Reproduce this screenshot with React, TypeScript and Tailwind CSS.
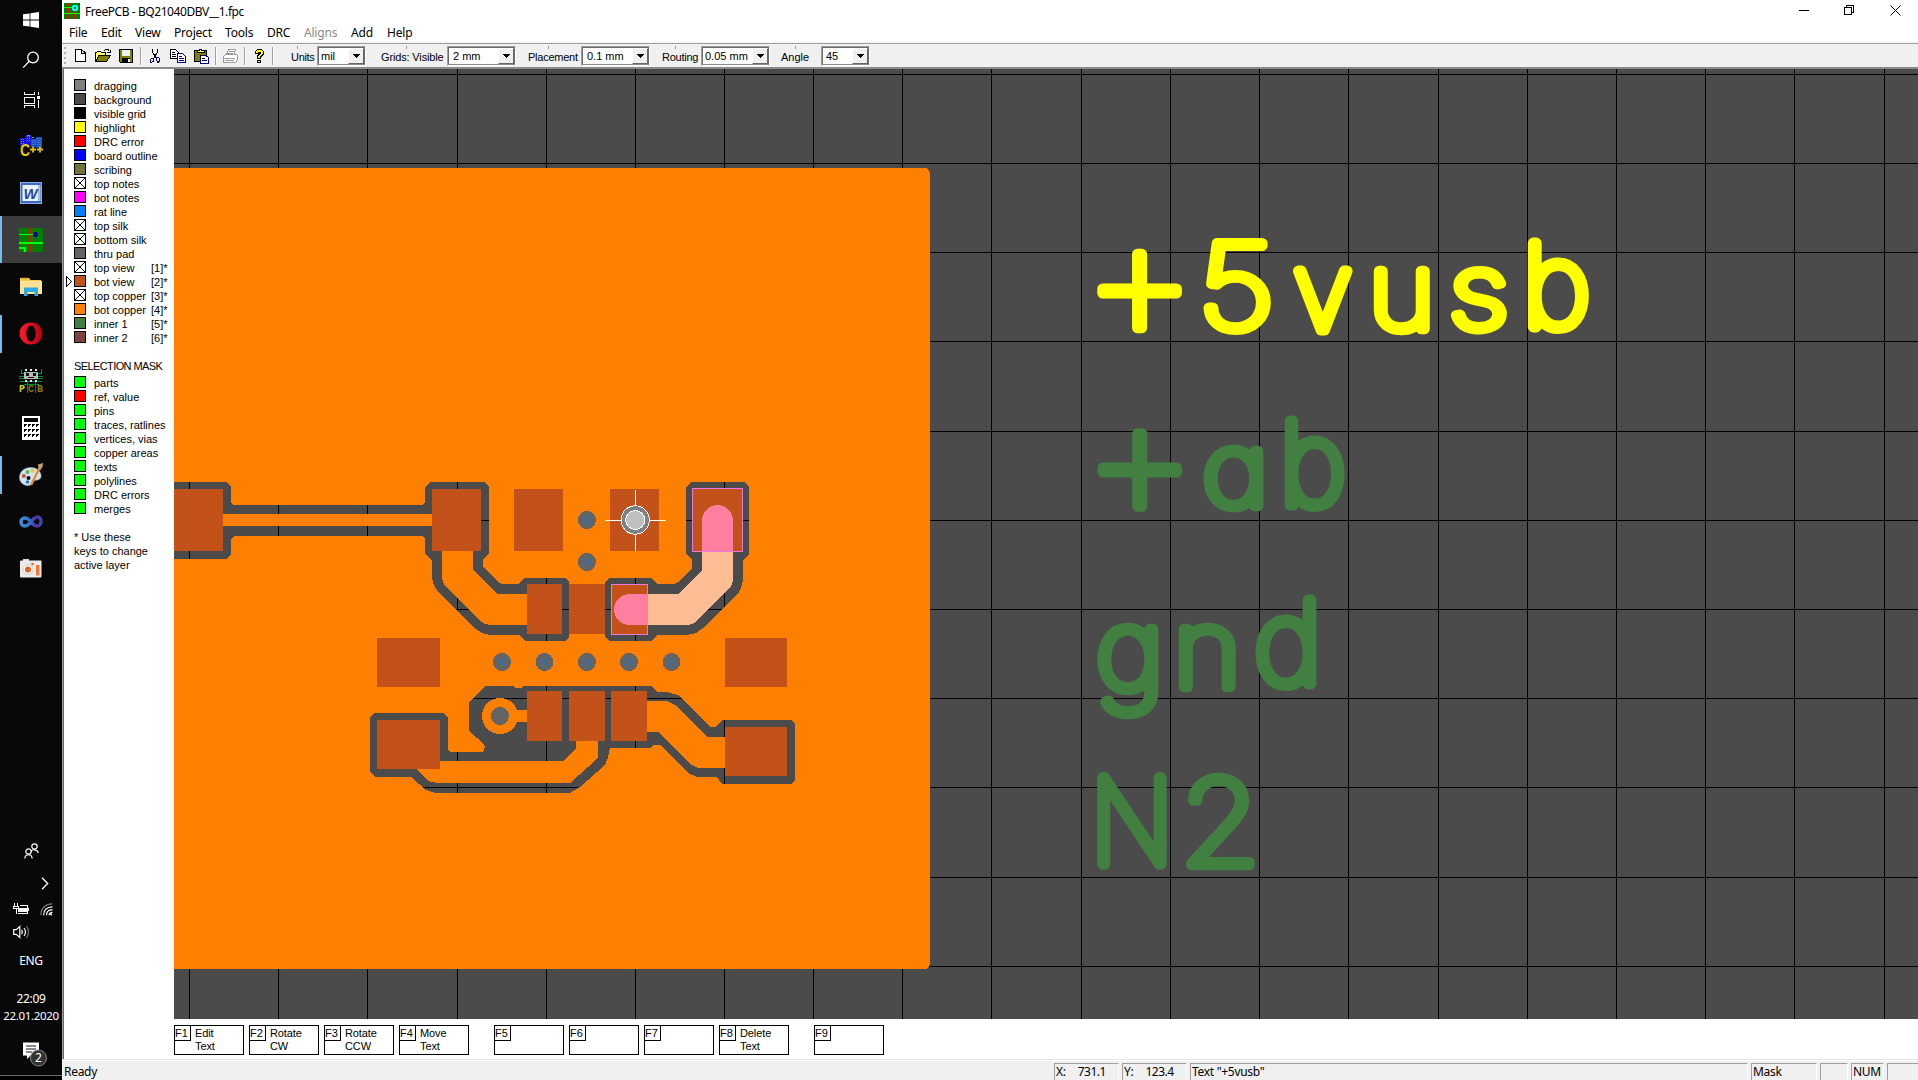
import React, { useMemo } from "react";

const UI = "font-['Noto_Sans',sans-serif]";
const ARIAL = "font-['Liberation_Sans',Arial,sans-serif]";

/* ---------- taskbar icons ---------- */

function WindowsIcon() {
  return (
    <svg width="16" height="16" viewBox="0 0 16 16" fill="#fff">
      <path d="M0 2.3 6.6 1.4V7.6H0zM7.4 1.3 16 0V7.6H7.4zM0 8.4H6.6V14.6L0 13.7zM7.4 8.4H16V16L7.4 14.8z" />
    </svg>
  );
}
function SearchIcon() {
  return (
    <svg width="18" height="18" viewBox="0 0 18 18" fill="none" stroke="#fff" strokeWidth="1.3">
      <circle cx="11" cy="6.5" r="5.3" />
      <path d="M7.2 10.3 1.2 16.6" />
    </svg>
  );
}
function TaskViewIcon() {
  return (
    <svg width="17" height="16" viewBox="0 0 17 16" fill="none" stroke="#fff" shapeRendering="crispEdges">
      <path d="M1.5 0V2.5H11.5V0M1.5 16V13.5H11.5V16M1.5 5.5H11.5V11.5H1.5zM15.5 0V3M15.5 8V16" />
      <rect x="14" y="4" width="3" height="3" fill="#fff" stroke="none" />
    </svg>
  );
}
function CppIcon() {
  return (
    <svg width="24" height="24" viewBox="0 0 24 24">
      <path d="M1 4h5V2h1v10H1zM7 1h6v11H7z" fill="#1616e0" />
      <path d="M12 5h5v8h-5zM17 3h6v11h-6z" fill="#1a4fc0" />
      <path d="M2.500 5v6M4.500 5v6M8.500 2v6M10.500 2v6M14 6v5M16 6v5M19 4v7M21 4v7" stroke="#4a9ad0" strokeDasharray="1 1" />
      <path d="M8 1.5h3M13 3.5h2" stroke="#5aa" />
      <text x="1" y="22" className="font-['Liberation_Sans',sans-serif]" fontWeight="700" fontSize="16" fill="#e8c800" textLength="10" lengthAdjust="spacingAndGlyphs">C</text>
      <path d="M11 15.500h6M14 12.500v6M18 15.500h6M21 12.500v6" stroke="#e0c000" strokeWidth="1.8" />
    </svg>
  );
}
function WordIcon() {
  return (
    <svg width="22" height="22" viewBox="0 0 22 22">
      <rect x="0.500" y="0.500" width="21" height="21" fill="#3d6bc0" stroke="#8fb0e6" />
      <rect x="2.500" y="3" width="16" height="16" fill="#e9f0fb" />
      <path d="M18.500 3h2v16h-2z" fill="#a9c1ea" />
      <text x="3.500" y="16.500" className="font-['Liberation_Sans',sans-serif]" fontStyle="italic" fontWeight="700" fontSize="15" fill="#24489c" textLength="14" lengthAdjust="spacingAndGlyphs">W</text>
    </svg>
  );
}
function PcbTaskIcon() {
  return (
    <svg width="24" height="24" viewBox="0 0 24 24" shapeRendering="crispEdges">
      <rect width="24" height="24" fill="#008000" />
      <path d="M10 0h2v24h-2zM16 8h1v16h-1z" fill="#f00" />
      <path d="M0 6h15v1H0zM0 14h24v2H0zM0 19h7v5H5v-3H0z" fill="#0f0" />
      <path d="M15 4h3v1h1v3h-1v1h-3v-1h-1V5h1z" fill="#00008b" />
      <path d="M16 6h1v1h-1z" fill="#008000" />
    </svg>
  );
}
function FolderIcon() {
  return (
    <svg width="22" height="20" viewBox="0 0 22 20">
      <path d="M0 1h9l1.500 2H21v14H0z" fill="#f2c94c" />
      <path d="M0 4h22v13H0z" fill="#fde293" />
      <path d="M1 1.500h7" stroke="#e8a81c" strokeWidth="1.500" />
      <path d="M4 10.500h14V19h-3.500v-4h-7v4H4z" fill="#2fa8e8" />
    </svg>
  );
}
function OperaIcon() {
  return (
    <svg width="24" height="23" viewBox="0 0 24 23">
      <defs>
        <linearGradient id="op" x1="0" x2="1">
          <stop offset="0" stopColor="#ff1b2d" />
          <stop offset="1" stopColor="#b5000f" />
        </linearGradient>
      </defs>
      <path fillRule="evenodd" fill="url(#op)" d="M12 .5C5.500.500.600 5.400.600 11.500S5.500 22.500 12 22.500 23.400 17.600 23.400 11.500 18.500.500 12 .500zM12 3.500c2.700 0 4.600 3.500 4.600 8s-1.900 8-4.600 8-4.600-3.500-4.600-8 1.900-8 4.600-8z" />
    </svg>
  );
}
function PcbMascotIcon() {
  return (
    <svg width="24" height="24" viewBox="0 0 24 24" className="overflow-visible" shapeRendering="crispEdges">
      <path d="M2 0v4h3M22 0v4h-3M0 7.500h5M0 9.500h5M19 7.500h5M19 9.500h5M1 12.500h22M8 13v11M16 13v11M5 15h15" fill="none" stroke="#0a8a3c" />
      <path d="M5 3h14v7H5z" fill="#b8b8b8" />
      <path d="M6 0h2v2H6zM11 0h2v2h-2zM16 0h2v2h-2zM6 11h2v2H6zM11 11h2v2h-2zM16 11h2v2h-2z" fill="#e8e8e8" />
      <path d="M7 4h3v3H7zM14 4h3v3h-3zM9 8h6v1H9z" fill="#111" />
      <path d="M6 3h2v1H6zM17 3h2v1h-2z" fill="#1fb5d8" />
      <g className="font-['Liberation_Mono',monospace]" fontWeight="700" fontSize="10">
        <text x="0" y="23" fill="#d0d020">P</text>
        <text x="9" y="23" fill="#8a7a10">C</text>
        <text x="18" y="23" fill="#8a7a10">B</text>
      </g>
    </svg>
  );
}
function CalculatorIcon() {
  return (
    <svg width="18" height="24" viewBox="0 0 18 24" shapeRendering="crispEdges">
      <rect width="18" height="24" fill="#fff" />
      <path d="M2 2h14v4H2z" fill="#080808" />
      {[8, 13, 18].map((y) =>
        [2, 6, 10, 14].map((x) => <path key={`${x}-${y}`} d={`M${x} ${y}h3v1h-1v1h-1v1h-1z`} fill="#080808" />)
      )}
    </svg>
  );
}
function PaintIcon() {
  return (
    <svg width="25" height="24" viewBox="0 0 25 24">
      <path d="M12 4.500C5 4.500.500 9 .500 14.500S5.500 23 10 22.500c3-.300 2-3 4-4.500s7 0 8-4c.800-5-4-9.500-10-9.500z" fill="#cfe4f4" stroke="#8fb4cf" strokeWidth=".6" />
      <circle cx="4.800" cy="13" r="2" fill="#e0453a" />
      <circle cx="8.500" cy="9" r="2" fill="#5fb54a" />
      <circle cx="13.500" cy="7.800" r="2" fill="#f3c233" />
      <circle cx="9.500" cy="15" r="2" fill="#0a0a0a" />
      <circle cx="8.500" cy="19" r="1.800" fill="#2f74c8" />
      <path d="M12 22 20.500 5" stroke="#e58a24" strokeWidth="2.400" />
      <path d="M19.500 6 19 1.500 24 0l-.300 3.500-2.200 3.500z" fill="#c79a6a" />
    </svg>
  );
}
function InfinityIcon() {
  return (
    <svg width="24" height="14" viewBox="0 0 24 14" fill="none" strokeWidth="3.400">
      <defs>
        <linearGradient id="inf" x1="0" x2="1">
          <stop offset="0" stopColor="#3f8fd8" />
          <stop offset="0.500" stopColor="#3468c4" />
          <stop offset="0.750" stopColor="#5b2aa0" />
          <stop offset="1" stopColor="#3a4ab0" />
        </linearGradient>
      </defs>
      <path stroke="url(#inf)" d="M12 7C9.500 3.500 7.500 3 5.800 3 3.600 3 2 4.700 2 7s1.600 4 3.800 4c2.400 0 4.400-2 6.200-4s3.600-5 6.400-5C20.600 2 22 4 22 6.500S20.400 11 18 11s-4.200-2-6-4z" />
    </svg>
  );
}
function CameraIcon() {
  return (
    <svg width="22" height="19" viewBox="0 0 22 19">
      <path d="M3 0h6v3H3z" fill="#ddd" />
      <rect y="1.500" width="21.500" height="17" rx="1" fill="#ececec" />
      <circle cx="8" cy="10.500" r="5" fill="#fff" stroke="#ccc" />
      <circle cx="8" cy="10.500" r="3.100" fill="#e8641e" />
      <circle cx="12.500" cy="5" r="1.300" fill="#e8641e" />
      <rect x="16" y="6" width="3.500" height="10.500" fill="#f07a32" />
    </svg>
  );
}

type Task = { icon: React.ReactNode; state?: "active" | "open" };
const tasks: Task[] = [
  { icon: <CppIcon /> },
  { icon: <WordIcon /> },
  { icon: <PcbTaskIcon />, state: "active" },
  { icon: <FolderIcon /> },
  { icon: <OperaIcon />, state: "open" },
  { icon: <PcbMascotIcon /> },
  { icon: <CalculatorIcon /> },
  { icon: <PaintIcon />, state: "open" },
  { icon: <InfinityIcon /> },
  { icon: <CameraIcon /> },
];

function Taskbar() {
  return (
    <aside className={`flex h-full w-[62px] shrink-0 flex-col bg-[#080808] text-white ${UI}`}>
      <div className="flex h-10 items-center justify-center"><WindowsIcon /></div>
      <div className="flex h-10 items-center justify-center"><SearchIcon /></div>
      <div className="flex h-10 items-center justify-center pl-px"><TaskViewIcon /></div>
      <div className="mt-[2px] flex flex-col">
        {tasks.map((t, i) => (
          <div key={i} className={`flex h-[47px] items-center ${t.state === "active" ? "bg-[#3c3c3c]" : ""}`}>
            <div className={`w-[2px] ${t.state === "active" ? "h-[47px] bg-[#76b9ed]" : t.state === "open" ? "h-[38px] bg-[#76b9ed]" : ""}`} />
            <div className="flex flex-1 justify-center pr-[2px]">{t.icon}</div>
          </div>
        ))}
      </div>
      <div className="flex-1" />
      <div className="flex h-9 items-center justify-center pt-[2px]">
        <svg width="15" height="16" viewBox="0 0 15 16" fill="none" stroke="#fff" strokeWidth="1.200">
          <circle cx="10.500" cy="3.500" r="2.700" /><path d="M7 8.500c1-2.500 6.500-2.500 7.300 1.500" />
          <circle cx="4.500" cy="8.500" r="2.700" /><path d="M.8 15.500c.300-5 7-5 7.400 0" />
        </svg>
      </div>
      <div className="flex h-[30px] items-center pl-[41px] pt-px">
        <svg width="8" height="13" viewBox="0 0 8 13" fill="none" stroke="#fff" strokeWidth="1.300"><path d="M1 .8 6.700 6.500 1 12.200" /></svg>
      </div>
      <div className="flex h-[23px] items-center gap-[10px] pl-[13px]">
        <svg width="17" height="12" viewBox="0 0 17 12" fill="none" stroke="#fff" shapeRendering="crispEdges" className="mb-[2px]">
          <path d="M1.500 0v3M4.500 0v3M0 3.500h6M.5 3v2h5V3M3 6v5M5 10.500h9.500v-8H7M15.500 5v3" />
          <path d="M5 4.500h8.500v4.500H5z" fill="#fff" stroke="none" />
        </svg>
        <svg width="14" height="13" viewBox="0 0 14 13" fill="none" stroke="#fff" strokeWidth="1.200">
          <path d="M.8 12C.800 5.500 5.500.900 12.500.900" stroke="#777" />
          <path d="M3.600 12.200C3.600 7 7 4 12.500 3.800M6.500 12.200c0-3 2-5.300 6-5.500M9 12.200c.200-1.500 1.300-2.700 3.500-2.900" />
          <circle cx="11.200" cy="11.500" r="1" fill="#fff" stroke="none" />
        </svg>
      </div>
      <div className="flex h-6 items-center pb-[2px] pl-[13px]">
        <svg width="17" height="14" viewBox="0 0 17 14" fill="none" stroke="#fff" strokeWidth="1.200">
          <path d="M.7 4.700h2.500L6.800 1.500v11L3.200 9.300H.700z" /><path d="M8.600 4.800c1 1.400 1 3 0 4.400M11 3c1.900 2.500 1.900 5.500 0 8" /><path d="M13.500 1c2.700 4 2.700 8 0 12" stroke="#777" />
        </svg>
      </div>
      <div className="flex h-8 items-center justify-center text-[12px] tracking-[-0.3px]">ENG</div>
      <div className="mt-[13px] flex flex-col items-center text-[12px] leading-[17px] tracking-[-0.35px]">
        <span>22:09</span>
        <span className="whitespace-nowrap text-[11.500px]">22.01.2020</span>
      </div>
      <div className="mt-[18px] flex h-[33px] pl-[23px]">
        <svg width="26" height="26" viewBox="0 0 26 26">
          <path d="M0 .5h16v13H7.500L4 17v-3.500H0z" fill="#fff" />
          <path d="M3 4h10M3 7h10M3 10h6" stroke="#111" />
          <circle cx="15.500" cy="16" r="8" fill="#333" stroke="#888" />
          <text x="15.500" y="20.300" fontSize="12" fill="#fff" textAnchor="middle">2</text>
        </svg>
      </div>
      <div className="h-[5px] shrink-0 border-t border-[#6a6a6a] bg-black" />
    </aside>
  );
}

/* ---------- title, menu and toolbar ---------- */

function AppIcon() {
  return (
    <svg width="16" height="16" viewBox="0 0 16 16" shapeRendering="crispEdges">
      <rect width="16" height="16" fill="#008000" />
      <path d="M4 0h2v16H4zM10 8h2v8h-2z" fill="#f00" />
      <path d="M0 4h9v1H0zM0 10h16v1H0z" fill="#0f0" />
      <circle cx="11" cy="5" r="2.300" fill="#008000" stroke="#0ff" strokeWidth="1.600" />
    </svg>
  );
}

const menu: [string, string][] = [
  ["File", "w-[32px]"],
  ["Edit", "w-[34px]"],
  ["View", "w-[39px]"],
  ["Project", "w-[51px]"],
  ["Tools", "w-[42px]"],
  ["DRC", "w-[37px]"],
  ["Aligns", "w-[47px]"],
  ["Add", "w-[36px]"],
  ["Help", "w-[40px]"],
];

function TitleBar() {
  return (
    <header className={`flex h-[22px] shrink-0 items-start bg-white pl-[2px] text-[12px] text-black ${UI}`}>
      <div className="pt-[3px]"><AppIcon /></div>
      <span className="ml-[5px] whitespace-nowrap leading-[24px] tracking-[-0.43px]">FreePCB - BQ21040DBV__1.fpc</span>
      <div className="flex-1" />
      <div className="flex items-center gap-[35px] pr-[17px] pt-[5px]">
        <svg width="11" height="11" viewBox="0 0 11 11" stroke="#000" shapeRendering="crispEdges"><path d="M1 5.500h10" /></svg>
        <svg width="11" height="11" viewBox="0 0 11 11" stroke="#000" fill="none" shapeRendering="crispEdges"><path d="M.5 2.500h7v7h-7zM2.500 2V.500h7v7H8" /></svg>
        <svg width="11" height="11" viewBox="0 0 11 11" stroke="#000"><path d="M.5.500l10 10M10.500.500l-10 10" /></svg>
      </div>
    </header>
  );
}

function MenuBar() {
  return (
    <nav className={`flex h-[20px] shrink-0 bg-white pl-[7px] text-[12px] leading-[22px] tracking-[-0.2px] ${UI}`}>
      {menu.map(([m, w]) => (
        <span key={m} className={`${w} whitespace-nowrap ${m === "Aligns" ? "text-[#8a8a8a]" : "text-black"}`}>{m}</span>
      ))}
    </nav>
  );
}

const toolIcons = {
  create: <path d="M3.500 1.500h6l4 3.500v8.500h-10zM9.500 1.500v3.500h3.500" fill="#fff" stroke="#000" />,
  open: (
    <>
      <path d="M.5 13.500v-9h1l1-1h3l1 1h4v2" fill="#ff6" stroke="#000" />
      <path d="M.500 13.500 4 7.500h11.500l-4 6z" fill="#808000" stroke="#000" />
      <path d="M9 2.500l1.500-1H13l1.500 2M12 4h3V1.500" fill="none" stroke="#000" />
    </>
  ),
  save: (
    <>
      <path d="M1.500 1.500h13v13H3l-1.500-1z" fill="#808000" stroke="#000" />
      <path d="M4 2h8v6H4z" fill="#f0f0f0" />
      <path d="M4 10h8v4H4z" fill="#000" /><path d="M9.500 11h2v3h-2z" fill="#f0f0f0" />
    </>
  ),
  cut: (
    <>
      <path d="M5.500 1v3l3.500 6M10.500 1v3L7 10" fill="none" stroke="#000" />
      <path d="M4.500 10.500h2v3h-1l-1 1h-1v-3zM9.500 9.500h2l1 1.500v2l-1 1h-1l-1-1.500z" fill="none" stroke="#000080" />
    </>
  ),
  copy: (
    <>
      <path d="M.5 1.500h5l2.500 2.500v6.500H.500z" fill="#fff" stroke="#000" /><path d="M2 4h3M2 6h4M2 8h4" stroke="#000" />
      <path d="M7.500 5.500h5l3 3v6h-8z" fill="#fff" stroke="#000080" /><path d="M9 8.500h3M9 10.500h5M9 12.500h5" stroke="#000080" />
    </>
  ),
  paste: (
    <>
      <path d="M1.500 2.500h12v11h-12z" fill="#808000" stroke="#000" />
      <path d="M4.500 3.500v-1h2l.500-1.500h1.500l.500 1.500h2v2h-6.500z" fill="#ff6" stroke="#000" />
      <path d="M7.500 7.500h5l3 2v5.500h-8z" fill="#fff" stroke="#000080" /><path d="M9 10h3M9 12h5" stroke="#000080" />
    </>
  ),
  print: (
    <>
      <path d="M4.500 7 6.500 1.500h7L12 7M1.500 8.500l2-2h11l1 1v4l-2 3h-12z" fill="#fff" stroke="#9a9a9a" />
      <path d="M7 3.500h5M6 5.500h5M2 10.500h11M3 12.500h9" stroke="#9a9a9a" />
    </>
  ),
  help: (
    <>
      <path d="M4.500 5.500v-2l2-2h4l2 2v2.500l-3 3v1.500h-3V8l3-3v-.500h-2v1.500z" fill="#ff0" stroke="#000" />
      <path d="M6.500 12.500h3v2h-3z" fill="#ff0" stroke="#000" />
    </>
  ),
};

function Tool({ name }: { name: keyof typeof toolIcons }) {
  return (
    <button className="flex h-[22px] w-[23px] items-center justify-center">
      <svg width="16" height="16" viewBox="0 0 16 16" shapeRendering="crispEdges">{toolIcons[name]}</svg>
    </button>
  );
}
function Sep({ className = "" }: { className?: string }) {
  return <div className={`h-[18px] w-[2px] shrink-0 border-l border-[#a0a0a0] border-r border-r-white ${className}`} />;
}
function Combo({ value, className, pad = "pl-[4px]" }: { value: string; className: string; pad?: string }) {
  return (
    <div className={`flex h-[20px] shrink-0 items-stretch border border-[#a0a0a0] border-b-white border-r-white bg-white ${className}`}>
      <div className="flex flex-1 items-stretch border border-[#696969] border-b-[#8a8a8a] border-r-[#696969]">
        <span className={`flex-1 whitespace-nowrap text-[11px] leading-[16px] ${pad}`}>{value}</span>
        <div className="flex w-[16px] items-center justify-center border border-b-[#696969] border-l-white border-r-[#696969] border-t-white bg-[#f0f0f0]">
          <svg width="7" height="4" viewBox="0 0 7 4" shapeRendering="crispEdges"><path d="M0 0h7v1H6v1H5v1H4v1H3V3H2V2H1V1H0z" /></svg>
        </div>
      </div>
    </div>
  );
}
function ToolLabel({ children, className, tick }: { children: string; className: string; tick: string }) {
  return (
    <div className={`flex h-[20px] shrink-0 flex-col ${className}`}>
      <div className={`h-[3px] w-px bg-[#a0a0a0] ${tick}`} />
      <span className="mt-[2px] whitespace-nowrap text-[11px] leading-[13px]">{children}</span>
    </div>
  );
}

function Toolbar() {
  return (
    <div className={`flex h-[27px] shrink-0 flex-col border-t border-[#f0f0f0] ${ARIAL}`}>
      <div className="flex h-[26px] items-center border-b-2 border-t border-b-[#8a8a8a] border-t-[#a0a0a0] bg-[#f0f0f0] pl-[2px] text-black">
        <div className="flex h-[20px] w-[4px] flex-col justify-around">
          {[0, 1, 2, 3].map((i) => <div key={i} className="h-[2px] w-[2px] bg-[#b4b4b4]" />)}
        </div>
        <Tool name="create" /><Tool name="open" /><Tool name="save" />
        <Sep className="ml-[3px] mr-px" />
        <Tool name="cut" /><Tool name="copy" /><Tool name="paste" />
        <Sep className="ml-[3px] mr-px" />
        <Tool name="print" />
        <Sep className="ml-[3px] mr-px" />
        <Tool name="help" />
        <Sep className="ml-[2px]" />
        <ToolLabel className="ml-[17px] w-[26px] tracking-[-0.3px]" tick="ml-[6px]">Units</ToolLabel>
        <Combo className="w-[49px]" value="mil" pad="pl-[2px]" />
        <ToolLabel className="ml-[15px] w-[66px] tracking-[-0.15px]" tick="ml-[25px]">Grids: Visible</ToolLabel>
        <Combo className="w-[69px]" value="2 mm" />
        <ToolLabel className="ml-[12px] w-[53px] tracking-[-0.25px]" tick="ml-[20px]">Placement</ToolLabel>
        <Combo className="w-[69px]" value="0.1 mm" />
        <ToolLabel className="ml-[12px] w-[39px] tracking-[-0.25px]" tick="ml-[13px]">Routing</ToolLabel>
        <Combo className="w-[69px]" value="0.05 mm" pad="pl-[2px]" />
        <ToolLabel className="ml-[11px] w-[40px]" tick="ml-[14px]">Angle</ToolLabel>
        <Combo className="w-[49px]" value="45" pad="pl-[3px]" />
      </div>
    </div>
  );
}

/* ---------- layer list ---------- */

type Layer = { name: string; color?: string; key?: string; current?: boolean };
const layers: Layer[] = [
  { name: "dragging", color: "bg-[#808080]" },
  { name: "background", color: "bg-[#4b4b4b]" },
  { name: "visible grid", color: "bg-black" },
  { name: "highlight", color: "bg-[#ffff00]" },
  { name: "DRC error", color: "bg-[#ff0000]" },
  { name: "board outline", color: "bg-[#0000ff]" },
  { name: "scribing", color: "bg-[#737337]" },
  { name: "top notes" },
  { name: "bot notes", color: "bg-[#ff00ff]" },
  { name: "rat line", color: "bg-[#0080ff]" },
  { name: "top silk" },
  { name: "bottom silk" },
  { name: "thru pad", color: "bg-[#646464]" },
  { name: "top view", key: "[1]*" },
  { name: "bot view", color: "bg-[#c25219]", key: "[2]*", current: true },
  { name: "top copper", key: "[3]*" },
  { name: "bot copper", color: "bg-[#ff8000]", key: "[4]*" },
  { name: "inner 1", color: "bg-[#418041]", key: "[5]*" },
  { name: "inner 2", color: "bg-[#804141]", key: "[6]*" },
];
const masks = ["parts", "ref, value", "pins", "traces, ratlines", "vertices, vias", "copper areas", "texts", "polylines", "DRC errors", "merges"];

function Swatch({ color }: { color?: string }) {
  return (
    <div className={`h-[12px] w-[12px] shrink-0 border border-black ${color ?? "bg-white"}`}>
      {!color && (
        <svg width="10" height="10" viewBox="0 0 10 10" stroke="#000" shapeRendering="crispEdges"><path d="M0 0l10 10M10 0 0 10" /></svg>
      )}
    </div>
  );
}

function LayerPanel() {
  return (
    <section className={`flex w-[112px] shrink-0 flex-col border-l border-[#a0a0a0] bg-white text-[11px] text-black ${ARIAL}`}>
      <div className="flex flex-1 flex-col border-l border-[#696969] pt-[9px]">
        {layers.map((l) => (
          <div key={l.name} className="flex h-[14px] items-center">
            <div className="w-[10px] pl-[2px]">
              {l.current && (
                <svg width="6" height="11" viewBox="0 0 6 11" fill="#fff" stroke="#000" shapeRendering="crispEdges"><path d="M.5.500v10l5-5z" /></svg>
              )}
            </div>
            <Swatch color={l.color} />
            <span className="ml-[8px] w-[57px] whitespace-nowrap pt-[2px] leading-[14px]">{l.name}</span>
            <span className="pt-[2px] leading-[14px]">{l.key}</span>
          </div>
        ))}
        <div className="mt-[15px] h-[14px] whitespace-nowrap pl-[10px] leading-[14px] tracking-[-0.6px]">SELECTION MASK</div>
        <div className="mt-[2px] flex flex-col">
          {masks.map((m) => (
            <div key={m} className="flex h-[14px] items-center pl-[10px]">
              <Swatch color={m === "ref, value" ? "bg-[#ff0000]" : "bg-[#00ff00]"} />
              <span className="ml-[8px] whitespace-nowrap pt-[2px] leading-[14px]">{m}</span>
            </div>
          ))}
        </div>
        <p className="mt-[15px] w-[90px] pl-[10px] leading-[14px]">* Use these<br />keys to change<br />active layer</p>
      </div>
    </section>
  );
}

/* ---------- board canvas ---------- */

const gridX = [189, 278, 367, 457, 546, 635, 724, 813, 902, 991, 1081, 1170, 1259, 1348, 1438, 1527, 1616, 1705, 1794, 1884];
const gridY = [74, 163, 252, 341, 431, 520, 609, 698, 787, 877, 966];

const boardOutline = "M174 168H926L929 170L930 173V964L929 967L926 969H174Z";
const clearances = [
  "M174 482H226L231 487V503L234 505H422L425 502V487L430 482H484L489 487V553L483 560V566L499 583L502 584H518L524 578H565L569 582V637L566 641H525L519 635H490L482 633L473 627L438 592L433 583L432 577V560L425 554V539L422 536H234L231 539V554L226 559H174Z",
  "M691 482H744L749 487V554L743 560V580L741 588L738 594L703 628L696 633L687 635H657L651 641H609L605 637V582L609 578H651L657 584H674L678 582L692 569V560L686 554V487Z",
  "M374 713H443L448 718V749L450 752H483L485 747L484 744L469 731V702L485 686H513L515 688H521L523 686H651L657 692H667L678 695L710 727H716L722 720H791L795 724V780L791 784H722L717 777H697L688 773L682 767L661 745H653L650 748H610L608 758L605 765L580 787L570 793H435L426 790L411 777H375L370 772V717Z",
].join("");
const traces = [
  "M220 514H435V526H220Z",
  "M442 549V578L444 584L448 589L479 620L485 624L491 625H529V594H497L473 569V549Z",
  "M438 761H563L576 748V739H598V757L597 759L570 783H437L428 781L415 767Z",
  "M645 701H667L675 705L707 737H727V768H698L690 764L659 732H645Z",
  "M510 710H528V722H510Z",
];
const pads: [number, number, number, number][] = [
  [174, 489, 49, 62], [432, 489, 49, 62], [514, 489, 49, 62], [610, 489, 49, 62], [693, 489, 49, 62],
  [527, 584, 35, 50], [569, 584, 36, 50], [611, 584, 36, 50],
  [377, 638, 63, 49], [725, 638, 62, 49], [377, 720, 63, 49], [725, 727, 62, 49],
  [527, 691, 35, 50], [569, 691, 36, 50], [611, 691, 36, 50],
];
const vias: [number, number][] = [[587, 520], [587, 562], [502, 662], [544.5, 662], [587, 662], [629, 662], [671.5, 662]];

type Glyph = { ch: string; box: [number, number, number, number]; like?: string };
type Label = { color: string; glyphs: Glyph[] };
/* box = left, top, right, bottom of the drawn glyph, pen width included */
const labels: Label[] = [
  {
    color: "#ffff00",
    glyphs: [
      { ch: "+", box: [1097, 249, 1183, 335] }, { ch: "5", box: [1203, 237, 1272, 335] }, { ch: "v", box: [1292, 265, 1353, 335] },
      { ch: "u", box: [1373, 265, 1430, 335] }, { ch: "s", box: [1450, 265, 1507, 335] }, { ch: "b", box: [1527, 237, 1589, 335] },
    ],
  },
  {
    color: "#418041",
    glyphs: [
      { ch: "+", box: [1097, 428, 1183, 513] }, { ch: "a", like: "q", box: [1203, 444, 1264, 513] }, { ch: "b", box: [1284, 415, 1345, 513] },
    ],
  },
  {
    color: "#418041",
    glyphs: [{ ch: "g", box: [1097, 622, 1159, 720] }, { ch: "n", box: [1178, 622, 1236, 692] }, { ch: "d", box: [1255, 594, 1317, 692] }],
  },
  { color: "#418041", glyphs: [{ ch: "N", box: [1097, 772, 1167, 870] }, { ch: "2", box: [1186, 772, 1256, 870] }] },
];

const PEN = 13;
const HAIR = 2;
const STROKE = PEN - HAIR;

/* Thin glyphs drawn with a round pen, each one fitted to its box */
function PenText({ label }: { label: Label }) {
  const items = useMemo(() => {
    const ctx = document.createElement("canvas").getContext("2d")!;
    ctx.font = "100 100px Inter";
    return label.glyphs.map((g) => {
      const m = ctx.measureText(g.like ?? g.ch);
      const v = g.like ? ctx.measureText("o") : m;
      const [l, t, r, b] = g.box;
      const w = (m.actualBoundingBoxRight + m.actualBoundingBoxLeft) / 100;
      const h = (v.actualBoundingBoxAscent + v.actualBoundingBoxDescent) / 100;
      const size = Math.sqrt(((r - l - STROKE) / w) * ((b - t - STROKE) / h));
      const kx = (r - l) / (size * w + STROKE);
      const ky = (b - t) / (size * h + STROKE);
      return {
        ch: g.ch,
        size,
        kx,
        ky,
        x: l + kx * (STROKE / 2 + (m.actualBoundingBoxLeft * size) / 100),
        y: t + ky * (STROKE / 2 + (v.actualBoundingBoxAscent * size) / 100),
      };
    });
  }, [label]);
  return (
    <g fill={label.color} stroke={label.color} strokeWidth={STROKE} strokeLinejoin="round" strokeLinecap="round">
      {items.map((i, n) => (
        <text
          key={n}
          className="font-[Inter,sans-serif] [font-feature-settings:'cv11']"
          fontWeight="100"
          fontSize={i.size}
          transform={`translate(${i.x} ${i.y}) scale(${i.kx} ${i.ky})`}
        >
          {i.ch}
        </text>
      ))}
    </g>
  );
}

function BoardCanvas() {
  return (
    <svg width="1744" height="950" viewBox="174 69 1744 950" className="block shrink-0 bg-[#4b4b4b]">
      <g shapeRendering="crispEdges">
        {gridX.map((x) => <path key={x} d={`M${x + 0.5} 69V1019`} stroke="#000" />)}
        {gridY.map((y) => <path key={y} d={`M174 ${y + 0.5}H1918`} stroke="#000" />)}
        <path d={boardOutline + clearances} fillRule="evenodd" fill="#ff8000" />
        {traces.map((d) => <path key={d} d={d} fill="#ff8000" />)}
        <circle cx="500" cy="716" r="18" fill="#ff8000" />
        <circle cx="500" cy="716" r="9" fill="#646464" />
        {pads.map(([x, y, w, h]) => <rect key={`${x}-${y}`} x={x} y={y} width={w} height={h} rx="1" fill="#c25219" />)}
        {vias.map(([x, y]) => (
          <g key={`${x}-${y}`}>
            <circle cx={x} cy={y} r="9" fill="#646464" />
            <path d={`M${Math.floor(x) - 5} ${y - 5}l10 10M${Math.floor(x) + 5} ${y - 5}l-10 10`} stroke="#0080ff" strokeWidth="0.8" />
          </g>
        ))}
        <path d="M702 549H733V581L731 586L694 623L688 625H645V594H679L702 570.500Z" fill="#ffbd95" />
        <path d="M702 551V520.500A15.500 15.500 0 0 1 733 520.500V551Z" fill="#ff7fa0" />
        <path d="M647 594H629.500A15.500 15.500 0 0 0 629.500 625H647Z" fill="#ff7fa0" />
        <rect x="692.500" y="488.500" width="50" height="63" fill="none" stroke="#e77ad6" />
        <rect x="611.500" y="584.500" width="36" height="50" fill="none" stroke="#e77ad6" />
        <path d="M605 520.500H666M635.500 490V551" stroke="#fff" />
        <circle cx="635.200" cy="520" r="14.200" fill="#808080" stroke="#fff" />
        <circle cx="635.200" cy="520" r="9.500" fill="#c0c0c0" stroke="#fff" />
      </g>
      {labels.map((l, i) => <PenText key={i} label={l} />)}
    </svg>
  );
}

/* ---------- function keys and status bar ---------- */

const fkeys: { key: string; text: [string, string]; gap?: boolean }[] = [
  { key: "F1", text: ["Edit", "Text"] },
  { key: "F2", text: ["Rotate", "CW"] },
  { key: "F3", text: ["Rotate", "CCW"] },
  { key: "F4", text: ["Move", "Text"] },
  { key: "F5", text: ["", ""], gap: true },
  { key: "F6", text: ["", ""] },
  { key: "F7", text: ["", ""] },
  { key: "F8", text: ["Delete", "Text"] },
  { key: "F9", text: ["", ""], gap: true },
];

function FunctionKeys() {
  return (
    <div className={`flex h-[40px] items-start bg-white pt-[6px] text-[11px] text-black ${ARIAL}`}>
      {fkeys.map((f) => (
        <div key={f.key} className={`mr-[5px] flex h-[30px] w-[70px] items-start border border-black ${f.gap ? "ml-[20px]" : ""}`}>
          <div className="h-[15px] w-[16px] border-b border-r border-black leading-[15px]">{f.key}</div>
          <div className="flex flex-col pl-[4px] pt-px leading-[13px] tracking-[-0.1px]">
            <span>{f.text[0]}</span>
            <span>{f.text[1]}</span>
          </div>
        </div>
      ))}
    </div>
  );
}

function Pane({ children, className }: { children?: React.ReactNode; className: string }) {
  return <div className={`h-[17px] shrink-0 whitespace-pre border-l border-t border-[#a0a0a0] pl-px leading-[16px] ${className}`}>{children}</div>;
}

function StatusBar() {
  return (
    <footer className="flex h-[21px] shrink-0 flex-col border-t border-[#e3e3e3]">
      <div className={`flex h-[20px] items-start border-t border-white bg-[#f0f0f0] pt-[2px] text-[12px] tracking-[-0.3px] text-black ${UI}`}>
        <span className="w-[992px] pl-[2px] leading-[18px]">Ready</span>
        <Pane className="mr-[3px] flex w-[65px] gap-[12px] border-r border-r-white"><span>X:</span><span className="tracking-[-0.5px]">731.1</span></Pane>
        <Pane className="mr-[3px] flex w-[65px] gap-[12px] border-r border-r-white"><span>Y:</span><span className="tracking-[-0.5px]">123.4</span></Pane>
        <Pane className="mr-[3px] w-[558px] border-r border-r-white">Text "+5vusb"</Pane>
        <Pane className="mr-[3px] w-[66px] border-r border-r-white">Mask</Pane>
        <Pane className="mr-[3px] w-[28px] border-r border-r-white" />
        <Pane className="mr-[3px] w-[33px] border-r border-r-white">NUM</Pane>
        <Pane className="w-[31px]" />
      </div>
    </footer>
  );
}

export default function App() {
  return (
    <div className="flex h-[1080px] w-[1918px] overflow-hidden bg-white">
      <Taskbar />
      <main className="flex min-w-0 flex-1 flex-col">
        <TitleBar />
        <MenuBar />
        <Toolbar />
        <div className="flex h-[990px] shrink-0">
          <LayerPanel />
          <div className="flex flex-col">
            <BoardCanvas />
            <FunctionKeys />
          </div>
        </div>
        <StatusBar />
      </main>
    </div>
  );
}
